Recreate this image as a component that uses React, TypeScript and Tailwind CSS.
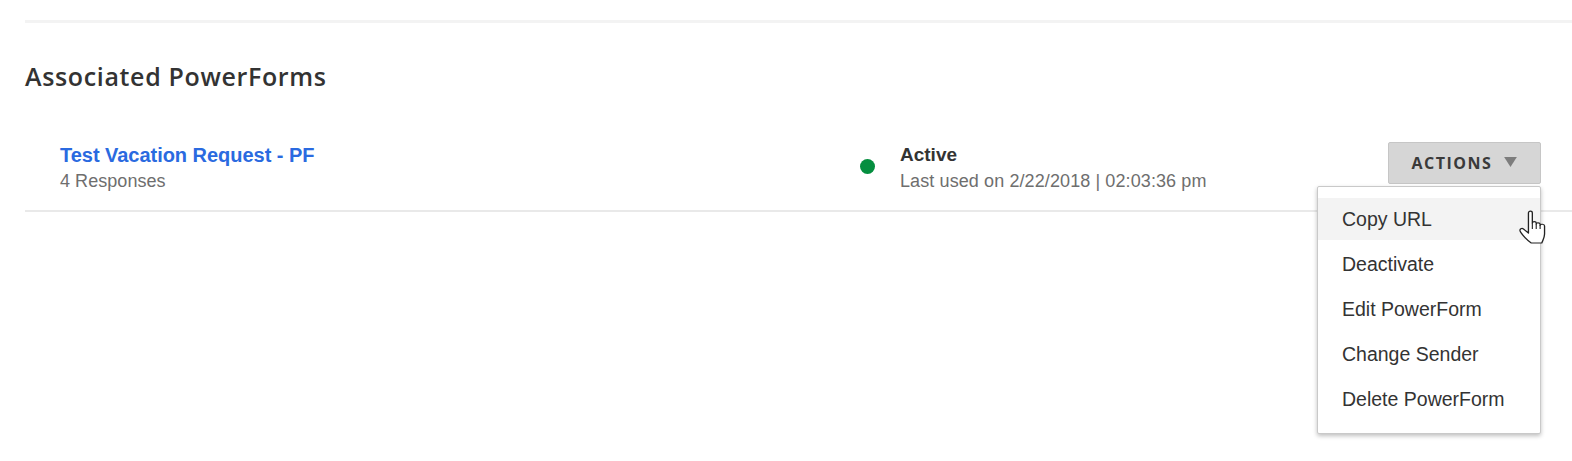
import React from "react";

const menuItems = ["Copy URL", "Deactivate", "Edit PowerForm", "Change Sender", "Delete PowerForm"];

const HandCursor = () => (
    <svg width="30" height="35" viewBox="0 0 27 35" preserveAspectRatio="none" className="absolute left-[1519px] top-[210px]">
        <path
            d="M8.5 3c0-2.500 3.500-2.500 3.500 0v10c0-1.800 3.500-1.800 3.500 0v1c0-1.600 3.500-1.600 3.500.3v1c0-1.600 4-1.400 4 .7v8c0 3.500-1.500 6-2.500 9h-9.500c-3-2-9-9-10-12-.6-2 1.500-3.200 3-2l4.500 4z"
            fill="#fff"
            stroke="#222"
            strokeWidth="1.2"
            strokeLinejoin="round"
        />
        <path d="M12 13v6M15.500 14v5M19 15v4" stroke="#222" strokeWidth="1" fill="none" />
    </svg>
);

const App: React.FC = () => {
    return (
        <div className="relative h-[461px] w-[1572px] overflow-hidden bg-white pl-[25px] pt-[20px] font-['Liberation_Sans',sans-serif]">
            <div className="h-[3px] bg-[#f3f3f3]" />
            <h2 className="mt-[38px] font-['Open_Sans',sans-serif] text-[25px] leading-[30px] font-semibold tracking-[0.65px] text-[#333]">
                Associated PowerForms
            </h2>
            <div className="mt-[49px] flex h-[72px] items-start border-b-2 border-[#e9e9e9] pl-[35px]">
                <div className="w-[800px] pt-[3px]">
                    <a className="block text-[20px] leading-[24px] font-bold tracking-[-0.03px] text-[#2a6ae0]">Test Vacation Request - PF</a>
                    <div className="mt-[2px] text-[18px] leading-[24px] tracking-[0.05px] text-[#6e6e6e]">4 Responses</div>
                </div>
                <div className="mt-[19px] h-[15px] w-[15px] rounded-full bg-[#058e3f]" />
                <div className="ml-[25px] w-[488px] pt-[3px]">
                    <div className="text-[19px] leading-[24px] font-bold text-[#333]">Active</div>
                    <div className="mt-[2px] text-[18px] leading-[24px] tracking-[0.1px] text-[#6e6e6e]">Last used on 2/22/2018 | 02:03:36 pm</div>
                </div>
                <button className="mt-[2px] flex h-[42px] w-[153px] items-center justify-center gap-[12px] rounded-[2px] border border-[#c6c6c6] bg-[#d6d6d6] font-['Open_Sans',sans-serif] text-[16px] font-bold tracking-[1.5px] text-[#3a3a3a]">
                    ACTIONS
                    <svg width="13" height="10" viewBox="0 0 14 11" className="-mt-[2px]">
                        <path d="M0 0h14L7 11z" fill="#7d7d7d" />
                    </svg>
                </button>
            </div>
            <div className="absolute left-[1317px] top-[186px] h-[248px] w-[224px] rounded-[2px] border border-[#c9c9c9] bg-white pt-[11px] shadow-[0_2px_4px_rgba(0,0,0,0.25)]">
                {menuItems.map((item, i) => (
                    <div
                        key={item}
                        className={`mb-[3px] flex h-[42px] items-center pl-[24px] pt-[2px] text-[19.5px] text-[#333] ${i === 0 ? "bg-[#f3f3f3]" : ""}`}
                    >
                        {item}
                    </div>
                ))}
            </div>
            <HandCursor />
        </div>
    );
};

export default App;
